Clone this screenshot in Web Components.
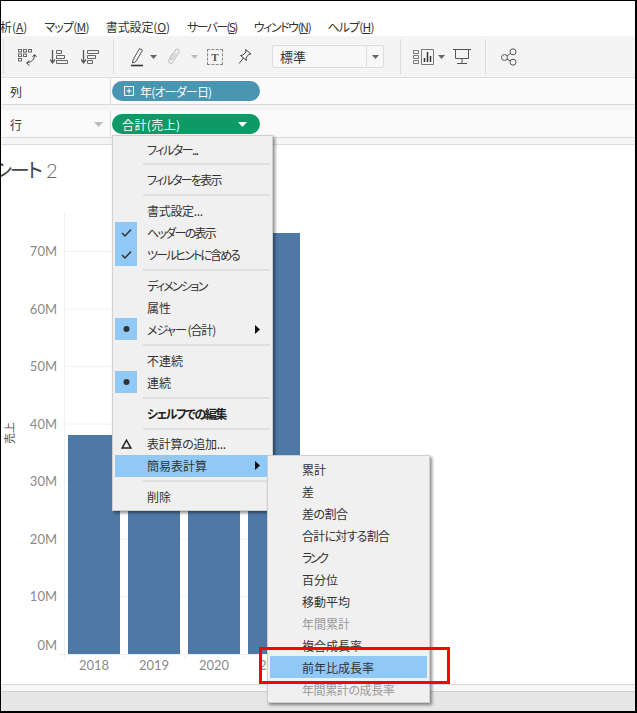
<!DOCTYPE html>
<html lang="ja">
<head>
<meta charset="utf-8">
<title>シート 2</title>
<style>
    html, body { margin: 0; padding: 0; background: #fff; overflow: hidden; }
</style>
</head>
<body>
<app-window>
    <menu-bar slot="menu">
        <span>分析(<u>A</u>)</span>
        <span style="letter-spacing:-.8px">マップ(<u>M</u>)</span>
        <span style="letter-spacing:-.1px">書式設定(<u>O</u>)</span>
        <span style="letter-spacing:-1.7px">サーバー(<u>S</u>)</span>
        <span style="letter-spacing:-1.4px">ウィンドウ(<u>N</u>)</span>
        <span style="letter-spacing:-.8px">ヘルプ(<u>H</u>)</span>
    </menu-bar>
    <tool-bar slot="tools"></tool-bar>
    <shelf-row slot="shelves" label="列">
        <field-pill color="#4a95b2" plus style="letter-spacing:-.8px">年(オーダー日)</field-pill>
    </shelf-row>
    <shelf-row slot="shelves" label="行" caret>
        <field-pill color="#0c9a67" open style="letter-spacing:.4px">合計(売上)</field-pill>
    </shelf-row>
    <sales-chart slot="chart"></sales-chart>

    <pop-menu slot="overlay" style="left:112px;top:135px">
        <menu-item style="letter-spacing:-1.5px">フィルター...</menu-item>
        <menu-sep></menu-sep>
        <menu-item style="letter-spacing:-1.75px">フィルターを表示</menu-item>
        <menu-sep></menu-sep>
        <menu-item style="letter-spacing:-.3px">書式設定...</menu-item>
        <menu-item mark="check" style="letter-spacing:-1.7px">ヘッダーの表示</menu-item>
        <menu-item mark="check" style="letter-spacing:-1.9px">ツールヒントに含める</menu-item>
        <menu-sep></menu-sep>
        <menu-item style="letter-spacing:-1.7px">ディメンション</menu-item>
        <menu-item>属性</menu-item>
        <menu-item mark="dot" arrow style="letter-spacing:-1.1px">メジャー (合計)</menu-item>
        <menu-sep></menu-sep>
        <menu-item>不連続</menu-item>
        <menu-item mark="dot">連続</menu-item>
        <menu-sep></menu-sep>
        <menu-item bold style="letter-spacing:-1.5px">シェルフでの編集</menu-item>
        <menu-sep></menu-sep>
        <menu-item mark="delta" style="letter-spacing:-.3px">表計算の追加...</menu-item>
        <menu-item arrow active>簡易表計算</menu-item>
        <menu-sep></menu-sep>
        <menu-item>削除</menu-item>
    </pop-menu>

    <pop-menu slot="overlay" style="left:267px;top:455px;width:163px">
        <menu-item>累計</menu-item>
        <menu-item>差</menu-item>
        <menu-item style="letter-spacing:-.5px">差の割合</menu-item>
        <menu-item style="letter-spacing:-.75px">合計に対する割合</menu-item>
        <menu-item style="letter-spacing:-2.5px">ランク</menu-item>
        <menu-item>百分位</menu-item>
        <menu-item>移動平均</menu-item>
        <menu-item disabled>年間累計</menu-item>
        <menu-item>複合成長率</menu-item>
        <menu-item active>前年比成長率</menu-item>
        <menu-item disabled style="letter-spacing:-.4px">年間累計の成長率</menu-item>
    </pop-menu>

    <red-box slot="overlay" style="left:259px;top:647px;width:191px;height:37px"></red-box>
</app-window>

<script>
class AppWindow extends HTMLElement {
    constructor() {
        super();
        const shadow = this.attachShadow({ mode: 'open' });
        shadow.innerHTML = `
            <style>
                :host {
                    display: block;
                    position: relative;
                    box-sizing: border-box;
                    width: 637px;
                    height: 713px;
                    overflow: hidden;
                    border: solid #000;
                    border-width: 1px 2px 2px 1px;
                    background: #fff;
                    color: #333;
                    font: 12px "Noto Sans CJK JP", "Liberation Sans", sans-serif;
                    font-feature-settings: "palt";
                }
                #page { display: flex; flex-direction: column; height: 100%; }
                #shelves { display: flex; flex-direction: column; gap: 6px; background: #f5f5f5; padding-bottom: 6px; border-bottom: 1px solid #dcdcdc; }
                #footer { height: 6px; background: #f6f6f6; border-top: 1px solid #d8d8d8; border-bottom: 1px solid #cfcfcf; }
                #status { flex: 1; background: #e6e6e6; }
                /* overlays use page coordinates minus the 1px frame */
                #overlay { position: absolute; left: -1px; top: -1px; }
            </style>
            <div id="page">
                <slot name="menu"></slot>
                <slot name="tools"></slot>
                <div id="shelves"><slot name="shelves"></slot></div>
                <slot name="chart"></slot>
                <div id="footer"></div>
                <div id="status"></div>
            </div>
            <div id="overlay"><slot name="overlay"></slot></div>
        `;
    }
}

class MenuBar extends HTMLElement {
    constructor() {
        super();
        const shadow = this.attachShadow({ mode: 'open' });
        shadow.innerHTML = `
            <style>
                :host {
                    display: flex;
                    flex: none;
                    align-items: flex-end;
                    gap: 17px;
                    height: 35px;
                    box-sizing: border-box;
                    margin-left: -13px;
                    background: #fff;
                    white-space: nowrap;
                    line-height: 18px;
                }
            </style>
            <slot></slot>
        `;
    }
}

class ToolBar extends HTMLElement {
    constructor() {
        super();
        const shadow = this.attachShadow({ mode: 'open' });
        shadow.innerHTML = `
            <style>
                :host {
                    display: flex;
                    flex: none;
                    align-items: center;
                    height: 42px;
                    box-sizing: border-box;
                    background: #f4f4f4;
                    border-bottom: 1px solid #dedede;
                }
                .sep { width: 1px; height: 35px; background: #dcdcdc; flex: none; }
                svg { display: block; flex: none; fill: none; stroke: #555; stroke-width: 1; }
                .caret { width: 7px; height: 4px; stroke: none; fill: #666; }
                #style {
                    display: flex;
                    align-items: center;
                    box-sizing: border-box;
                    width: 112px;
                    height: 23px;
                    margin-left: 20px;
                    background: #f8f8f8;
                    border: 1px solid #dcdcdc;
                    border-radius: 2px;
                    font-size: 13px;
                }
                #style span { flex: 1; padding-left: 7px; }
                #style i { display: flex; align-items: center; justify-content: center; width: 16px; height: 100%; border-left: 1px solid #dcdcdc; }
                #textbox {
                    display: flex;
                    align-items: center;
                    justify-content: center;
                    flex: none;
                    box-sizing: border-box;
                    width: 16px;
                    height: 16px;
                    margin-left: 9px;
                    border: 1px dashed #888;
                    color: #555;
                    font: bold 11px "Liberation Serif", serif;
                }
            </style>
            <div class="sep" style="margin-left:2px"></div>

            <svg style="margin-left:13px" width="20" height="18" viewBox="0 0 20 18">
                <g stroke-width="1" stroke="#666">
                    <rect x="1.5" y="1.5" width="3" height="2.5"/><rect x="6.5" y="1.5" width="3" height="2.5"/><rect x="11.5" y="1.5" width="3" height="2.5"/>
                    <rect x="1.5" y="6" width="3" height="2.5"/><rect x="6.5" y="6" width="3" height="2.5"/>
                    <rect x="1.5" y="10.5" width="3" height="2.5"/>
                </g>
                <path d="M17.5 7c0 4-2.500 7-7.500 8M12.500 12.500 9.500 15l3 2.500M15.500 9l2-2.500 2 2.500" stroke="#444"/>
            </svg>

            <svg style="margin-left:13px" width="20" height="16" viewBox="0 0 20 16">
                <path d="M2.500 1v12M0 10.500l2.500 3.500L5 10.500" stroke-width="1.300"/>
                <path d="M6.500 1.500h5v3h-5zM6.500 6.500h8v3h-8zM6.500 11.500h11v3h-11z" stroke="#666"/>
            </svg>
            <svg style="margin-left:11px" width="20" height="16" viewBox="0 0 20 16">
                <path d="M2.500 1v12M0 10.500l2.500 3.500L5 10.500" stroke-width="1.300"/>
                <path d="M6.500 1.500h11v3h-11zM6.500 6.500h8v3h-8zM6.500 11.500h5v3h-5z" stroke="#666"/>
            </svg>

            <div class="sep" style="margin-left:12px"></div>

            <svg style="margin-left:16px" width="14" height="20" viewBox="0 0 14 20">
                <path d="M3 13 9.500 1.500l3 1.700L6 14.500l-3.500 1.500z" stroke="#555"/>
                <path d="M1 18.500h12" stroke="#333" stroke-width="1.600"/>
            </svg>
            <svg class="caret" style="margin-left:6px" viewBox="0 0 7 4"><path d="M0 0h7L3.500 4z"/></svg>

            <svg style="margin-left:9px" width="16" height="18" viewBox="0 0 16 18">
                <path d="M6 6 3 12c-1 2 1 4 3 3l1-1 6-10c1-2-1-3.500-3-2.500L4.500 10c-.5 1.200.8 2 1.700 1.200L10 5.500" stroke="#c4c4c4" stroke-width="1.200"/>
            </svg>
            <svg class="caret" style="margin-left:9px;fill:#bbb" viewBox="0 0 7 4"><path d="M0 0h7L3.500 4z"/></svg>

            <div id="textbox">T</div>

            <svg style="margin-left:15px" width="14" height="17" viewBox="0 0 14 17">
                <path d="M7.500 1.500 13 6l-2.500.5L8 10l.5 2.500L2.500 7.500 5 7l3-3zM5.500 10 1 15.500" stroke="#444"/>
            </svg>

            <div id="style"><span>標準</span><i><svg class="caret" viewBox="0 0 7 4"><path d="M0 0h7L3.500 4z"/></svg></i></div>

            <div class="sep" style="margin-left:16px"></div>

            <svg style="margin-left:12px" width="21" height="16" viewBox="0 0 21 16">
                <path d="M.5 1.500h5v3h-5zM.5 6.500h5v3h-5zM.5 11.500h5v3h-5z" stroke="#777"/>
                <path d="M8.500.5h12v15h-12z" stroke="#777"/>
                <path d="M11.500 13V9M14.500 13V3M17.500 13V7" stroke="#333" stroke-width="1.500"/>
            </svg>
            <svg class="caret" style="margin-left:4px" viewBox="0 0 7 4"><path d="M0 0h7L3.500 4z"/></svg>

            <svg style="margin-left:8px" width="18" height="17" viewBox="0 0 18 17">
                <path d="M0 1.500h18M2.500 1.500v9h13v-9M9 10.500v5M4 15.500h10" stroke="#555"/>
            </svg>

            <div class="sep" style="margin-left:14px"></div>

            <svg style="margin-left:14px" width="18" height="18" viewBox="0 0 18 18">
                <circle cx="4.500" cy="9.500" r="3"/><circle cx="13" cy="3.800" r="3"/><circle cx="13" cy="14.200" r="3"/>
                <path d="M7 8 10.500 5.500M7 11 10.500 13"/>
            </svg>
        `;
    }
}

class ShelfRow extends HTMLElement {
    constructor() {
        super();
        const shadow = this.attachShadow({ mode: 'open' });
        const label = this.getAttribute('label');
        const caret = this.hasAttribute('caret') ? '<svg viewBox="0 0 9 5"><path d="M0 0h9L4.500 5z" fill="#bbb"/></svg>' : '';
        shadow.innerHTML = `
            <style>
                :host {
                    display: flex;
                    height: 27px;
                    box-sizing: border-box;
                    background: #fafafa;
                    border-bottom: 1px solid #d8d8d8;
                }
                #name {
                    display: flex;
                    align-items: center;
                    justify-content: space-between;
                    box-sizing: border-box;
                    width: 110px;
                    padding: 0 7px 0 9px;
                    font-size: 12px;
                    border-right: 1px solid #dedede;
                }
                svg { width: 9px; height: 5px; }
                #drop { flex: 1; display: flex; align-items: center; padding-left: 1px; }
            </style>
            <div id="name"><span>${label}</span>${caret}</div>
            <div id="drop"><slot></slot></div>
        `;
    }
}

class FieldPill extends HTMLElement {
    constructor() {
        super();
        const shadow = this.attachShadow({ mode: 'open' });
        const plus = this.hasAttribute('plus') ? `
            <svg width="10" height="10" viewBox="0 0 10 10" style="margin:0 6px 0 0">
                <path d="M.5.5h9v9h-9zM5 2.500v5M2.500 5h5" fill="none" stroke="#fff"/>
            </svg>` : '';
        const caret = this.hasAttribute('open') ? `
            <svg width="9" height="5" viewBox="0 0 9 5" style="position:absolute;right:13px;top:8px">
                <path d="M0 0h9L4.500 5z" fill="#fff"/>
            </svg>` : '';
        shadow.innerHTML = `
            <style>
                :host {
                    display: flex;
                    position: relative;
                    align-items: center;
                    box-sizing: border-box;
                    width: 148px;
                    height: 20px;
                    padding-left: ${plus ? 12 : 10}px;
                    border-radius: 10px;
                    background: ${this.getAttribute('color')};
                    color: #fff;
                    font-size: 12px;
                    white-space: nowrap;
                }
            </style>
            ${plus}<slot></slot>${caret}
        `;
    }
}

class SalesChart extends HTMLElement {
    constructor() {
        super();
        const shadow = this.attachShadow({ mode: 'open' });

        const ticks = ['70M', '60M', '50M', '40M', '30M', '20M', '10M'];
        const gridY = [251, 308.5, 366, 423.500, 481, 538.500, 596];
        let grid = '';
        ticks.forEach((t, i) => {
            grid += `<path d="M64 ${gridY[i] + .5}H300" stroke="#f2f2f2"/>`;
            grid += `<text class="axis" x="57" y="${gridY[i] + 5}" text-anchor="end">${t}</text>`;
        });

        const bars = [[68, 435, '2018'], [128, 360, '2019'], [188, 300, '2020'], [248, 233, '2021']];
        let marks = '';
        bars.forEach(b => {
            marks += `<rect x="${b[0]}" y="${b[1]}" width="52" height="${654 - b[1]}" fill="#4e79a7"/>`;
            marks += `<text class="axis" x="${b[0] + 26}" y="670" text-anchor="middle">${b[2]}</text>`;
            marks += `<path d="M${b[0] + 56.500} 654v4" stroke="#eee"/>`;
        });

        shadow.innerHTML = `
            <style>
                :host { display: block; flex: none; height: 539px; overflow: hidden; background: #fff; }
                svg { display: block; }
                text { font-family: "Lato", "Liberation Sans", sans-serif; }
                .axis { font-size: 13px; fill: #8a8a8a; }
                .title { font-family: "Noto Sans CJK JP", sans-serif; font-size: 20px; letter-spacing: -2px; fill: #444; }
                .digit { font-size: 20px; font-weight: 300; fill: #666; }
                .rot { font-family: "Noto Sans CJK JP", sans-serif; font-size: 11px; fill: #555; }
            </style>
            <svg width="634" height="539" viewBox="1 145 634 539">
                <text class="title" x="41" y="178" text-anchor="end">シート</text>
                <text class="digit" x="46" y="178">2</text>
                <path d="M64.500 212V658" stroke="#f0f0f0"/>
                <path d="M60 654.500H300" stroke="#eee"/>
                ${grid}
                <text class="axis" x="57" y="650" text-anchor="end">0M</text>
                <text class="rot" transform="translate(14 444) rotate(-90)">売上</text>
                ${marks}
            </svg>
        `;
    }
}

class PopMenu extends HTMLElement {
    constructor() {
        super();
        const shadow = this.attachShadow({ mode: 'open' });
        shadow.innerHTML = `
            <style>
                :host {
                    display: block;
                    position: absolute;
                    box-sizing: border-box;
                    width: 161px;
                    padding: 2px;
                    background: #f0f0f0;
                    border: 1px solid #cfcfcf;
                    box-shadow: 2px 2px 3px rgba(0, 0, 0, 0.45);
                    white-space: nowrap;
                }
            </style>
            <slot></slot>
        `;
    }
}

class MenuItem extends HTMLElement {
    constructor() {
        super();
        const shadow = this.attachShadow({ mode: 'open' });
        const glyphs = {
            check: '<path d="M1 5l3 3 6-6.500" fill="none" stroke="#333" stroke-width="1.500"/>',
            dot: '<circle cx="5.500" cy="5" r="3" fill="#333"/>',
            delta: '<path d="M5.500 1.200 1.200 9h8.600z" fill="none" stroke="#222" stroke-width="1.500"/>'
        };
        const mark = this.getAttribute('mark');
        const glyph = mark ? `<svg width="11" height="10" viewBox="0 0 11 10">${glyphs[mark]}</svg>` : '';
        const arrow = this.hasAttribute('arrow') ? '<svg id="arrow" width="5" height="9" viewBox="0 0 5 9"><path d="M0 0l5 4.500L0 9z" fill="#111"/></svg>' : '';
        shadow.innerHTML = `
            <style>
                :host {
                    display: flex;
                    align-items: center;
                    height: 22px;
                    line-height: 22px;
                    font-size: 12px;
                    color: #333;
                }
                :host([disabled]) { color: #9a9a9a; }
                :host([bold]) { font-weight: bold; color: #222; }
                :host([active]) { background: #90c8f6; }
                #mark {
                    flex: none;
                    display: flex;
                    align-items: center;
                    justify-content: center;
                    width: 22px;
                    height: 100%;
                    margin-right: 10px;
                }
                :host([mark="check"]) #mark, :host([mark="dot"]) #mark { background: #90c8f6; }
                #text { flex: 1; margin-top: 1px; }
                #arrow { margin-right: 10px; }
            </style>
            <div id="mark">${glyph}</div>
            <div id="text"><slot></slot></div>
            ${arrow}
        `;
    }
}

class MenuSep extends HTMLElement {
    constructor() {
        super();
        const shadow = this.attachShadow({ mode: 'open' });
        shadow.innerHTML = `
            <style>
                :host { display: flex; align-items: center; height: 8.830px; padding-left: 28px; }
                div { flex: 1; height: 2px; background: #e0e0e0; }
            </style>
            <div></div>
        `;
    }
}

class RedBox extends HTMLElement {
    constructor() {
        super();
        const shadow = this.attachShadow({ mode: 'open' });
        shadow.innerHTML = `
            <style>
                :host { display: block; position: absolute; box-sizing: border-box; border: 3px solid #f00; }
            </style>
        `;
    }
}

customElements.define('app-window', AppWindow);
customElements.define('menu-bar', MenuBar);
customElements.define('tool-bar', ToolBar);
customElements.define('shelf-row', ShelfRow);
customElements.define('field-pill', FieldPill);
customElements.define('sales-chart', SalesChart);
customElements.define('pop-menu', PopMenu);
customElements.define('menu-item', MenuItem);
customElements.define('menu-sep', MenuSep);
customElements.define('red-box', RedBox);
</script>
</body>
</html>
